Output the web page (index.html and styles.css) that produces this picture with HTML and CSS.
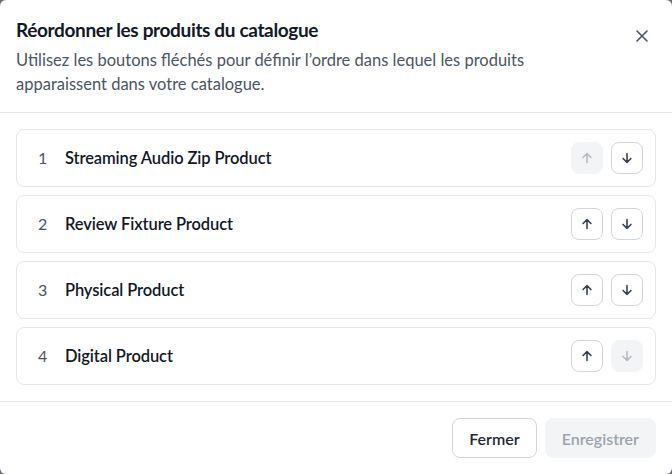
FILE: index.html
```html
<!DOCTYPE html>
<html lang="fr">
<head>
<meta charset="utf-8">
<link rel="stylesheet" href="styles.css">
</head>
<body>
<div class="modal">
  <header class="head">
    <div class="head-text">
      <h1 class="title">Réordonner les produits du catalogue</h1>
      <p class="desc">Utilisez les boutons fléchés pour définir l’ordre dans lequel les produits apparaissent dans votre catalogue.</p>
    </div>
    <button class="close" aria-label="Fermer">
      <svg width="14" height="14" viewBox="0 0 14 14"><path d="M2 2L12 12M12 2L2 12" stroke="#4b5563" stroke-width="1.6" stroke-linecap="round"/></svg>
    </button>
  </header>
  <main class="list">
    <div class="row">
      <span class="num">1</span><span class="name">Streaming Audio Zip Product</span>
      <div class="btns">
        <button class="arrow disabled"><svg viewBox="0 0 16 16"><path d="M8 13V3M3.5 7.5L8 3l4.5 4.5"/></svg></button>
        <button class="arrow"><svg viewBox="0 0 16 16"><path d="M8 3v10M3.5 8.5L8 13l4.5-4.5"/></svg></button>
      </div>
    </div>
    <div class="row">
      <span class="num">2</span><span class="name">Review Fixture Product</span>
      <div class="btns">
        <button class="arrow"><svg viewBox="0 0 16 16"><path d="M8 13V3M3.5 7.5L8 3l4.5 4.5"/></svg></button>
        <button class="arrow"><svg viewBox="0 0 16 16"><path d="M8 3v10M3.5 8.5L8 13l4.5-4.5"/></svg></button>
      </div>
    </div>
    <div class="row">
      <span class="num">3</span><span class="name">Physical Product</span>
      <div class="btns">
        <button class="arrow"><svg viewBox="0 0 16 16"><path d="M8 13V3M3.5 7.5L8 3l4.5 4.5"/></svg></button>
        <button class="arrow"><svg viewBox="0 0 16 16"><path d="M8 3v10M3.5 8.5L8 13l4.5-4.5"/></svg></button>
      </div>
    </div>
    <div class="row">
      <span class="num">4</span><span class="name">Digital Product</span>
      <div class="btns">
        <button class="arrow"><svg viewBox="0 0 16 16"><path d="M8 13V3M3.5 7.5L8 3l4.5 4.5"/></svg></button>
        <button class="arrow disabled"><svg viewBox="0 0 16 16"><path d="M8 3v10M3.5 8.5L8 13l4.5-4.5"/></svg></button>
      </div>
    </div>
  </main>
  <footer class="foot">
    <button class="btn btn-outline">Fermer</button>
    <button class="btn btn-disabled">Enregistrer</button>
  </footer>
</div>
</body>
</html>
```

FILE: styles.css
```css
* { box-sizing: border-box; }
html, body { margin: 0; padding: 0; }
body {
  background: #6b7078;
  font-family: "Lato", "Noto Sans", sans-serif;
  width: 672px;
  height: 474px;
  overflow: hidden;
}
.modal {
  background: #fff;
  width: 672px;
  height: 474px;
  border-radius: 6px;
  display: flex;
  flex-direction: column;
}
.head {
  display: flex;
  align-items: flex-start;
  justify-content: space-between;
  padding: 16px 16px 16px 16px;
  border-bottom: 1px solid #e5e7eb;
}
.title {
  margin: 0;
  font-size: 19px;
  line-height: 28px;
  font-weight: 700;
  color: #111827;
  letter-spacing: -0.35px;
}
.desc {
  margin: 4px 0 0 0;
  font-size: 16.5px;
  line-height: 24px;
  color: #4b5563;
  width: 530px;
}
.close {
  border: 0;
  background: none;
  padding: 0;
  margin-top: 13px;
  margin-right: 7px;
  width: 14px;
  height: 14px;
  display: flex;
}
.list {
  padding: 16px;
  display: flex;
  flex-direction: column;
  gap: 8px;
  border-bottom: 1px solid #e5e7eb;
}
.row {
  height: 58px;
  border: 1px solid #e5e7eb;
  border-radius: 8px;
  display: flex;
  align-items: center;
  padding: 0 12px 0 20px;
}
.num {
  width: 28px;
  font-size: 16px;
  color: #4b5563;
  margin-top: -2px;
  padding-left: 1px;
}
.name {
  flex: 1;
  font-size: 16.5px;
  font-weight: 600;
  color: #111827;
  letter-spacing: -0.1px;
}
.btns { display: flex; gap: 8px; }
.arrow {
  width: 32px;
  height: 32px;
  border: 1px solid #d1d5db;
  border-radius: 8px;
  background: #fff;
  padding: 0;
  display: flex;
  align-items: center;
  justify-content: center;
}
.arrow svg {
  width: 14px;
  height: 14px;
  fill: none;
  stroke: #374151;
  stroke-width: 1.8;
  stroke-linecap: round;
  stroke-linejoin: round;
}
.arrow.disabled {
  background: #f3f4f6;
  border-color: #f3f4f6;
}
.arrow.disabled svg { stroke: #b4b9c2; }
.foot {
  display: flex;
  justify-content: flex-end;
  gap: 8px;
  padding: 16px;
}
.btn {
  height: 40px;
  border-radius: 8px;
  font-family: inherit;
  font-size: 16px;
  font-weight: 600;
  padding: 0 16px;
}
.btn-outline {
  background: #fff;
  border: 1px solid #d1d5db;
  color: #1f2937;
}
.btn-disabled {
  background: #f3f4f6;
  border: 1px solid #f3f4f6;
  color: #9ca3af;
}
```
